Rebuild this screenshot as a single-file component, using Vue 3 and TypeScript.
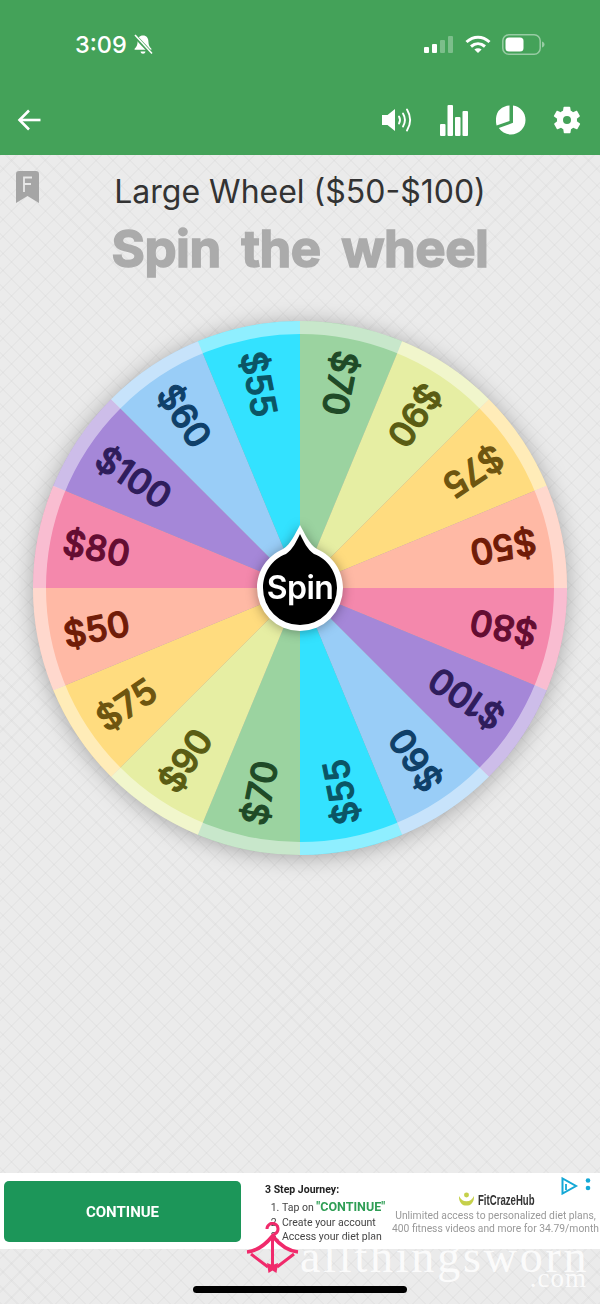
<template>
  <div class="screen">
    <header class="appbar">
      <div class="status">
        <div class="status-left">
          <span class="clock">3:09</span>
          <svg class="bell" width="20" height="21" viewBox="0 0 20 21">
            <path d="M10 1.500c-3.600 0-5.400 2.700-5.400 6 0 4-1.400 5.700-3 7.300v1h16.800v-1c-1.600-1.600-3-3.300-3-7.300 0-3.300-1.800-6-5.400-6z" fill="#fff" />
            <path d="M7.500 17.500h5c-.3 1.500-1.200 2.200-2.500 2.200s-2.200-.7-2.500-2.200z" fill="#fff" />
            <path d="M1.500 1.500 18.500 19.500" stroke="#44a259" stroke-width="4" />
            <path d="M2 1 19 19.500" stroke="#fff" stroke-width="1.600" />
          </svg>
        </div>
        <div class="status-right">
          <svg width="31" height="19" viewBox="0 0 31 19">
            <rect x="1" y="12" width="5" height="6" rx="1" fill="#fff" />
            <rect x="9" y="9" width="5" height="9" rx="1" fill="#fff" />
            <rect x="17" y="5" width="5" height="13" rx="1" fill="#fff" opacity=".3" />
            <rect x="25" y="1" width="5" height="17" rx="1" fill="#fff" opacity=".3" />
          </svg>
          <svg width="26" height="19" viewBox="0 0 26 19" fill="none" stroke="#fff" stroke-width="3">
            <path d="M1.500 7C8.500.5 17.500.5 24.500 7" />
            <path d="M6 11.500c4.200-3.700 9.800-3.700 14 0" />
            <path d="M13 18l-3.600-3.600c2-1.700 5.200-1.700 7.200 0z" fill="#fff" stroke="none" />
          </svg>
          <svg width="43" height="21" viewBox="0 0 43 21">
            <rect x=".8" y=".8" width="37.400" height="19.400" rx="6" fill="none" stroke="#fff" stroke-opacity=".45" stroke-width="1.500" />
            <rect x="3.500" y="3.500" width="18" height="14" rx="3.500" fill="#fff" />
            <path d="M40 7.500c1.600.5 2.500 1.600 2.500 3s-.9 2.500-2.500 3z" fill="#fff" opacity=".45" />
          </svg>
        </div>
      </div>
      <div class="toolbar">
        <svg class="back" width="24" height="22" viewBox="0 0 24 22" fill="none" stroke="#fff" stroke-width="2.600">
          <path d="M23.500 11H2.500" />
          <path d="M12 1.500 2.500 11l9.500 9.500" />
        </svg>
        <div class="tools">
          <svg width="31" height="26" viewBox="0 0 31 26">
            <path d="M1 8h5.500L14 2v22l-7.500-6H1z" fill="#fff" />
            <g fill="none" stroke="#fff" stroke-width="1.900" stroke-linecap="round">
              <path d="M18 9.500c1.300 2.200 1.300 4.800 0 7" />
              <path d="M22 6.500c2.400 4 2.400 9 0 13" />
              <path d="M26 2.500c3.900 6.500 3.900 14.500 0 21" />
            </g>
          </svg>
          <svg width="28" height="31" viewBox="0 0 28 31" fill="#fff">
            <rect x="0" y="19" width="5.500" height="12" rx="1" />
            <rect x="7.500" y="0" width="5.500" height="31" rx="1" />
            <rect x="15" y="12" width="5.500" height="19" rx="1" />
            <rect x="22.500" y="6" width="5.500" height="25" rx="1" />
          </svg>
          <svg width="30" height="30" viewBox="0 0 30 30" fill="#fff">
            <path d="M13.500.5V16L.6 20.500C-.9 15 0 7.500 4 4.500 6.500 2 10 .7 13.500.5z" />
            <path d="M17 .6C24 1.500 29.500 7.500 29.500 15c0 8-6.500 14.500-14.500 14.500-5 0-9.500-2.600-12.200-6.500L17 17.800z" />
          </svg>
          <svg class="gear" width="32" height="32" viewBox="0 0 24 24">
            <path fill="#fff" fill-rule="evenodd" d="M19.400 13c.1-.3.100-.7.100-1s0-.7-.1-1l2.100-1.600c.2-.2.200-.4.100-.6l-2-3.500c-.1-.2-.4-.3-.6-.2l-2.500 1c-.5-.4-1.100-.7-1.700-1l-.4-2.700c0-.2-.2-.4-.5-.4h-4c-.3 0-.5.200-.5.400l-.4 2.700c-.6.300-1.200.6-1.700 1l-2.500-1c-.2-.1-.5 0-.6.200l-2 3.500c-.1.200-.1.400.1.600L4.600 11c-.1.300-.1.700-.1 1s0 .7.100 1l-2.100 1.600c-.2.200-.2.400-.1.600l2 3.500c.1.200.4.300.6.200l2.500-1c.5.400 1.100.7 1.700 1l.4 2.700c0 .2.200.4.500.4h4c.3 0 .5-.2.500-.4l.4-2.700c.6-.3 1.200-.6 1.700-1l2.500 1c.2.100.5 0 .6-.2l2-3.500c.1-.2.100-.4-.1-.6zM12 15a3 3 0 1 1 0-6 3 3 0 0 1 0 6z" />
          </svg>
        </div>
      </div>
    </header>

    <main class="content">
      <svg class="bookmark" width="23" height="32" viewBox="0 0 23 32">
        <path d="M0 3a3 3 0 0 1 3-3h17a3 3 0 0 1 3 3v29l-11.500-7L0 32z" fill="#a5a5a5" />
        <path d="M8 21V6.500h8M8 13h7" fill="none" stroke="#e8e8e8" stroke-width="1.800" />
      </svg>
      <h2 class="title">Large Wheel ($50-$100)</h2>
      <h1 class="heading">Spin the wheel</h1>
      <svg class="wheel" width="600" height="600" viewBox="-300 -300 600 600">
        <g class="disc">
          <path v-for="s in slices" :key="s.angle" :d="s.path" :fill="s.fill" />
          <circle r="260.500" fill="none" stroke="#fff" stroke-opacity=".45" stroke-width="13" />
        </g>
        <text
          v-for="s in slices"
          :key="'t' + s.angle"
          class="prize"
          x="-241"
          y="13"
          :fill="s.ink"
          :stroke="s.ink"
          :transform="`rotate(${s.angle + 11.25 - 270})`"
        >{{ s.label }}</text>
        <g class="hub">
          <path d="M-17-39C-9-44-5-54 0-63 5-54 9-44 17-39 33-32 43-17 43 0A43 43 0 0 1-43 0C-43-17-33-32-17-39z" fill="#fff" />
          <path d="M-14-34C-7-39-4-46 0-54 4-46 7-39 14-34 28-29 37-15 37 0A37 37 0 0 1-37 0C-37-15-28-29-14-34z" fill="#000" />
          <text class="spin" y="11">Spin</text>
        </g>
      </svg>
    </main>

    <aside class="ad">
      <div class="ad-button">CONTINUE</div>
      <div class="ad-steps">
        <strong>3 Step Journey:</strong>
        <ol>
          <li>Tap on <b>"CONTINUE"</b></li>
          <li>Create your account</li>
          <li>Access your diet plan</li>
        </ol>
      </div>
      <div class="ad-brand">
        <div class="ad-logo">
          <svg width="15" height="14" viewBox="0 0 17 15">
            <circle cx="8.500" cy="3" r="2.800" fill="#c5d04a" />
            <path d="M0 4c2 4 4.500 6 8.500 6s6.500-2 8.500-6c.5 6-3 11-8.500 11S-.5 10 0 4z" fill="#c5d04a" />
          </svg>
          <span class="ad-name">FitCrazeHub</span>
        </div>
        <p>Unlimited access to personalized diet plans,<br />400 fitness videos and more for 34.79/month</p>
      </div>
      <svg class="ad-mark" width="30" height="18" viewBox="0 0 30 18">
        <path d="M1.500 1.500v15L15 9z" fill="none" stroke="#14a8d6" stroke-width="2" />
        <path d="M5 7v6" stroke="#14a8d6" stroke-width="1.800" />
        <circle cx="27" cy="3.500" r="2.300" fill="#14a8d6" />
        <circle cx="27" cy="11" r="2.300" fill="#14a8d6" />
      </svg>
    </aside>

    <div class="watermark">
      <svg class="hanger" width="56" height="56" viewBox="0 0 56 56" fill="none" stroke="#f02a6b" stroke-width="3">
        <path d="M21 7a5.500 5.500 0 1 1 8.500 4.500L26.500 14V20" />
        <path d="M1 30C11 29 20 22 26.500 14 33 22 42 29 52 30" stroke-width="3.600" />
        <path d="M5 32 22 45M48 32 31 45" />
        <path d="M26.500 18V46" stroke-width="3" />
        <path d="M21 41l5.500 2 5.500-2-1.500 10-4-2.500-4 2.500z" fill="#f02a6b" stroke="none" />
      </svg>
      <span class="wm-name">allthingsworn</span>
      <span class="wm-tld">.com</span>
    </div>
    <div class="home-bar"></div>
  </div>
</template>

<script setup lang="ts">
interface Prize {
  label: string;
  fill: string;
  ink: string;
}

const prizes: Prize[] = [
  { label: "$70", fill: "#9bd3a0", ink: "#1f4a27" },
  { label: "$90", fill: "#e6eea3", ink: "#5a5c14" },
  { label: "$75", fill: "#ffdc7f", ink: "#6e5510" },
  { label: "$50", fill: "#ffb9a5", ink: "#701c08" },
  { label: "$80", fill: "#f488ac", ink: "#640d32" },
  { label: "$100", fill: "#a587d8", ink: "#2f1d5c" },
  { label: "$60", fill: "#99cdf7", ink: "#0f4069" },
  { label: "$55", fill: "#33e2ff", ink: "#0b5565" },
];

const R = 267;
const STEP = 22.5;

function polar(deg: number): string {
  const a = (deg * Math.PI) / 180;
  return `${(R * Math.sin(a)).toFixed(2)} ${(-R * Math.cos(a)).toFixed(2)}`;
}

// the eight prizes go round the wheel twice
const slices = [...prizes, ...prizes].map((p, i) => {
  const angle = i * STEP;
  return {
    ...p,
    angle,
    path: `M0 0L${polar(angle)}A${R} ${R} 0 0 1 ${polar(angle + STEP)}Z`,
  };
});
</script>

<style>
html, body { margin: 0; padding: 0; }
</style>

<style scoped>
.screen {
  position: relative;
  width: 600px;
  height: 1304px;
  display: flex;
  flex-direction: column;
  overflow: hidden;
  background-color: #ebebeb;
  background-image:
    repeating-linear-gradient(45deg, rgba(0,0,0,.022) 0 1.5px, transparent 1.5px 12px),
    repeating-linear-gradient(-45deg, rgba(0,0,0,.022) 0 1.5px, transparent 1.5px 12px);
}
.appbar {
  height: 155px;
  flex: none;
  background: #44a259;
  display: flex;
  flex-direction: column;
  color: #fff;
}
.status {
  height: 90px;
  display: flex;
  justify-content: space-between;
  align-items: flex-start;
  padding: 34px 55px 0 75px;
  box-sizing: border-box;
}
.status-left { display: flex; align-items: center; gap: 6px; height: 21px; }
.clock { font: 500 23.500px/21px Inter, "Liberation Sans", sans-serif; }
.status-right { display: flex; align-items: center; gap: 11px; }
.toolbar {
  flex: 1;
  display: flex;
  align-items: flex-start;
  justify-content: space-between;
  padding: 14px 17px 0 17px;
}
.back { margin-top: 5px; }
.tools { display: flex; align-items: center; gap: 28px; }
.gear { margin-left: -3px; }
.content {
  position: relative;
  flex: 1;
  display: flex;
  flex-direction: column;
  align-items: center;
}
.bookmark { position: absolute; left: 16px; top: 16px; }
.title {
  margin: 17px 0 0;
  font: 400 32px/40px Inter, "Liberation Sans", sans-serif;
  color: #333;
}
.heading {
  margin: 9px 0 0;
  font: 700 51px/56px Inter, "Liberation Sans", sans-serif;
  color: #ababab;
  -webkit-text-stroke: 1.500px #ababab;
  word-spacing: 9px;
  letter-spacing: -.5px;
}
.wheel { margin-top: 11px; flex: none; overflow: visible; }
.disc { filter: drop-shadow(0 2px 11px rgba(0, 0, 0, .3)); }
.prize {
  font: 500 35px Inter, "Liberation Sans", sans-serif;
  stroke-width: 1.200px;
  stroke-linejoin: round;
}
.hub { filter: drop-shadow(0 1px 6px rgba(0, 0, 0, .35)); }
.spin {
  font: 600 32px Inter, "Liberation Sans", sans-serif;
  fill: #fff;
  text-anchor: middle;
  letter-spacing: -.5px;
}
.ad {
  position: relative;
  flex: none;
  height: 76px;
  margin-bottom: 55px;
  background: #fff;
  display: flex;
  font-family: Roboto, "Liberation Sans", sans-serif;
  filter: blur(.6px);
}
.ad-button {
  width: 237px;
  height: 61px;
  margin: 8px 0 0 4px;
  border-radius: 5px;
  background: #1c9659;
  color: #fff;
  font-size: 15px;
  font-weight: 700;
  display: flex;
  align-items: center;
  justify-content: center;
}
.ad-steps {
  margin-left: 24px;
  padding-top: 10px;
  width: 126px;
  font-size: 10.500px;
  color: #444;
  white-space: nowrap;
}
.ad-steps strong { color: #222; display: block; line-height: 14px; }
.ad-steps ol { margin: 3px 0 0 4px; padding-left: 13px; }
.ad-steps li { line-height: 14.500px; }
.ad-steps b { color: #2f9e55; font-size: 12.500px; }
.ad-brand {
  flex: 1;
  text-align: center;
  padding-top: 18px;
}
.ad-logo {
  display: flex;
  align-items: center;
  justify-content: center;
  gap: 4px;
  height: 16px;
}
.ad-name {
  width: 54px;
  white-space: nowrap;
  text-align: left;
  font: 700 15px "Liberation Sans", sans-serif;
  color: #333;
  transform: scaleX(.64);
  transform-origin: left center;
}
.ad-brand p {
  margin: 2px 0 0;
  font-size: 10.300px;
  line-height: 13px;
  color: #999;
  white-space: nowrap;
}
.ad-mark { position: absolute; right: 9px; top: 4px; }
.watermark {
  position: absolute;
  left: 246px;
  top: 1222px;
  width: 345px;
  height: 70px;
  color: rgba(255, 255, 255, .85);
  font-family: "Liberation Serif", serif;
}
.hanger { position: absolute; left: 0; top: 0; }
.wm-name {
  position: absolute;
  left: 54px;
  top: 16px;
  font-size: 46px;
  letter-spacing: 2.800px;
  line-height: 38px;
}
.wm-tld {
  position: absolute;
  right: 4px;
  top: 45px;
  font-size: 27px;
  line-height: 22px;
  letter-spacing: 1px;
}
.home-bar {
  position: absolute;
  left: 193px;
  top: 1286px;
  width: 214px;
  height: 7px;
  border-radius: 4px;
  background: #000;
}
</style>
